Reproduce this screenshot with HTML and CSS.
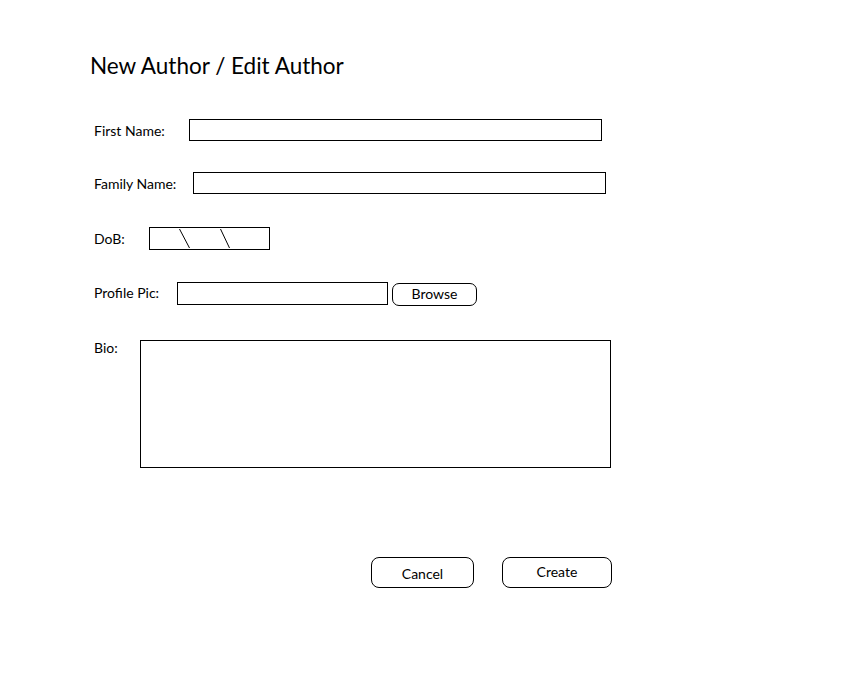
FILE: index.html
```html
<!DOCTYPE html>
<html>
<head>
<meta charset="utf-8">
<title>New Author / Edit Author</title>
<link rel="stylesheet" href="styles.css">
</head>
<body>
<div class="page">
  <h1 class="title">New Author / Edit Author</h1>
  <div class="form">
    <div class="row row-first">
      <span class="label label-first">First Name:</span>
      <div class="field field-first"></div>
    </div>
    <div class="row row-family">
      <span class="label label-family">Family Name:</span>
      <div class="field field-family"></div>
    </div>
    <div class="row row-dob">
      <span class="label label-dob">DoB:</span>
      <div class="field field-dob">
        <svg class="dob-lines" width="119" height="21" viewBox="0 0 119 21">
          <line x1="29.5" y1="1" x2="39.5" y2="20" stroke="#000" stroke-width="1"/>
          <line x1="70.5" y1="1" x2="79.5" y2="20" stroke="#000" stroke-width="1"/>
        </svg>
      </div>
    </div>
    <div class="row row-pic">
      <span class="label label-pic">Profile Pic:</span>
      <div class="field field-pic"></div>
      <div class="btn btn-browse">Browse</div>
    </div>
    <div class="row row-bio">
      <span class="label label-bio">Bio:</span>
      <div class="field field-bio"></div>
    </div>
  </div>
  <div class="actions">
    <div class="btn btn-cancel">Cancel</div>
    <div class="btn btn-create">Create</div>
  </div>
</div>
</body>
</html>
```
FILE: styles.css
```css
html, body {
  margin: 0;
  padding: 0;
  background: #fff;
}
body {
  font-family: Lato, "Open Sans", sans-serif;
  color: #000;
}
.page {
  width: 862px;
  height: 684px;
  padding-top: 52px;
  box-sizing: border-box;
}
.title {
  margin: 0 0 0 90px;
  font-size: 22.5px;
  font-weight: 400;
  line-height: 28px;
  height: 28px;
}
.form {
  margin-top: 39px;
  padding-left: 94px;
  display: flex;
  flex-direction: column;
}
.row {
  display: flex;
  align-items: flex-start;
}
.row-first { height: 53px; }
.row-family { height: 55px; }
.row-dob { height: 55px; }
.row-pic { height: 58px; }
.label {
  font-size: 14px;
  line-height: 22px;
  height: 22px;
  white-space: nowrap;
  flex: none;
}
.label-first { width: 95px; padding-top: 1px; }
.label-family { width: 99px; padding-top: 1px; }
.label-dob { width: 55px; padding-top: 1px; }
.label-pic { width: 83px; }
.label-bio {
  width: 46px;
  line-height: 16px;
}
.field {
  border: 1px solid #000;
  box-sizing: border-box;
  background: #fff;
  flex: none;
}
.field-first {
  width: 413px;
  height: 22px;
}
.field-family {
  width: 413px;
  height: 22px;
}
.field-dob {
  width: 121px;
  height: 23px;
}
.dob-lines {
  display: block;
}
.field-pic {
  width: 211px;
  height: 23px;
}
.field-bio {
  width: 471px;
  height: 128px;
}
.btn {
  border: 1px solid #000;
  box-sizing: border-box;
  border-radius: 8px;
  display: flex;
  align-items: center;
  justify-content: center;
  font-size: 14px;
  background: #fff;
  flex: none;
}
.btn-browse {
  margin-left: 4px;
  margin-top: 1px;
  width: 85px;
  height: 23px;
  border-radius: 7px;
  padding-bottom: 2px;
}
.actions {
  margin-top: 89px;
  display: flex;
  padding-left: 371px;
  gap: 28px;
}
.btn-cancel {
  width: 103px;
  height: 31px;
  padding-top: 1px;
}
.btn-create {
  width: 110px;
  height: 31px;
  padding-bottom: 3px;
}
```
